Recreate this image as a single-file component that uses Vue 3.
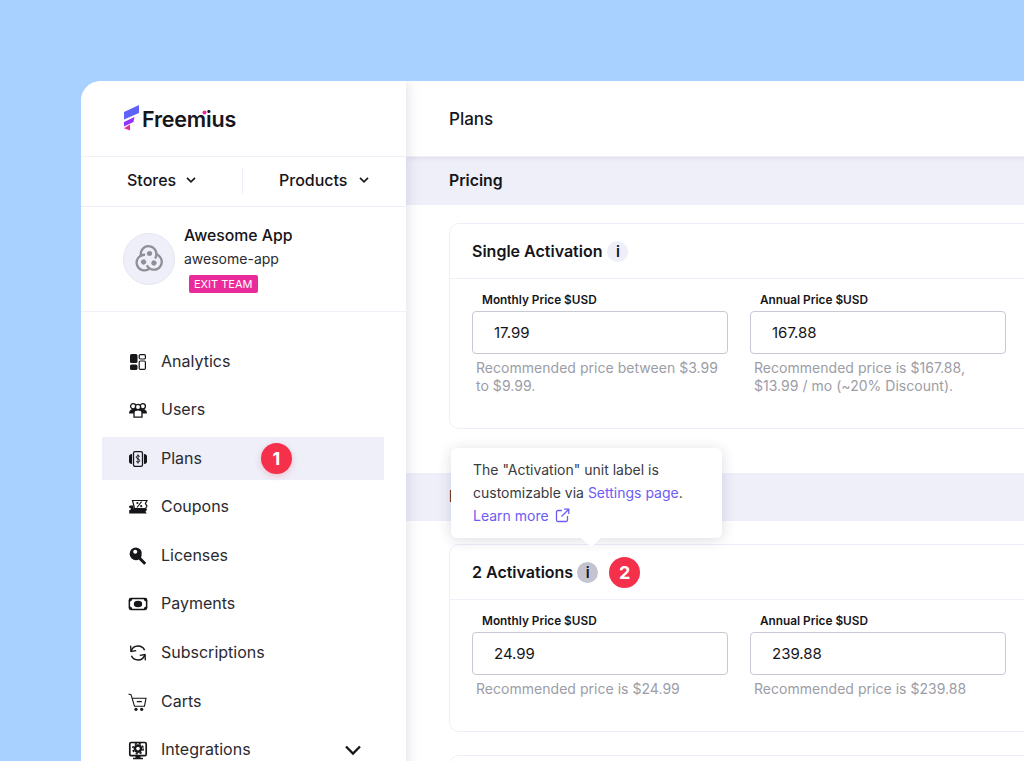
<script setup>
const nav = [
  { k: 'analytics', t: 'Analytics' },
  { k: 'users', t: 'Users' },
  { k: 'plans', t: 'Plans', active: true, badge: 1 },
  { k: 'coupons', t: 'Coupons' },
  { k: 'licenses', t: 'Licenses' },
  { k: 'payments', t: 'Payments' },
  { k: 'subs', t: 'Subscriptions' },
  { k: 'carts', t: 'Carts' },
  { k: 'integrations', t: 'Integrations', chevron: true }
]
const lobes = [0, 120, 240]
</script>

<template>
  <div class="page">
    <div class="window">
      <aside class="side">
        <div class="logo">
          <svg class="mark" width="16" height="26" viewBox="0 0 16 26">
            <path d="M0 7 15 0v8L0 14.500z" fill="#5f63f5" />
            <path d="M0 17 10.500 12 9.500 17 0 21.500z" fill="#9333ff" />
            <path d="M0 23.200 6 19.500V25.500z" fill="#ee2a9a" />
          </svg>
          <span class="brand">Freemius<i class="dot"></i></span>
        </div>
        <div class="switch">
          <div class="sw sw-l">Stores
            <svg width="12" height="8" viewBox="0 0 12 8"><path d="M2 1.800 6 5.800l4-4" fill="none" stroke="#1a1a1f" stroke-width="1.700" /></svg>
          </div>
          <div class="sw sw-r">Products
            <svg width="12" height="8" viewBox="0 0 12 8"><path d="M2 1.800 6 5.800l4-4" fill="none" stroke="#1a1a1f" stroke-width="1.700" /></svg>
          </div>
        </div>
        <div class="app">
          <div class="avatar">
            <svg width="32" height="32" viewBox="0 0 32 32" fill="none" stroke="#8f9097" stroke-width="2.300">
              <g v-for="r in lobes" :key="r" :transform="`rotate(${r} 16 16.500)`">
                <path d="M8.200 13.500A7.800 7.800 0 1 1 22 15.500" />
                <circle cx="16.500" cy="10.500" r="2.600" fill="#8f9097" stroke="none" />
              </g>
            </svg>
          </div>
          <div class="app-info">
            <div class="app-name">Awesome App</div>
            <div class="app-slug">awesome-app</div>
            <span class="exit">EXIT TEAM</span>
          </div>
        </div>
        <nav class="nav">
          <div v-for="n in nav" :key="n.k" class="item" :class="{ active: n.active }">
            <svg class="ico" width="20" height="20" viewBox="0 0 20 20">
              <g v-if="n.k === 'analytics'">
                <rect x="2" y="2" width="7.500" height="9" rx="1.600" fill="#15151a" />
                <rect x="2" y="12.500" width="7.500" height="5.500" rx="1.600" fill="#15151a" />
                <rect x="11.200" y="2.600" width="6.200" height="4.400" rx="1.200" fill="none" stroke="#15151a" stroke-width="1.200" />
                <rect x="11.200" y="9" width="6.200" height="8.400" rx="1.200" fill="none" stroke="#15151a" stroke-width="1.200" />
              </g>
              <g v-else-if="n.k === 'users'">
                <path d="M1 13.500c0-3 2-4.500 4-4.500h10c2 0 4 1.500 4 4.500H1z" fill="#15151a" />
                <circle cx="5.200" cy="6.300" r="2.600" fill="#fff" stroke="#15151a" stroke-width="1.300" />
                <circle cx="14.800" cy="6.300" r="2.600" fill="#fff" stroke="#15151a" stroke-width="1.300" />
                <circle cx="10" cy="7" r="2.600" fill="#fff" stroke="#15151a" stroke-width="1.300" />
                <path d="M6 17.200v-4.900c0-1.600 1.600-2.400 4-2.400s4 .8 4 2.400v4.900z" fill="#fff" stroke="#15151a" stroke-width="1.300" />
              </g>
              <g v-else-if="n.k === 'plans'">
                <rect x="5.500" y="2.600" width="9" height="14.800" rx="1.600" fill="none" stroke="#15151a" stroke-width="1.300" />
                <path d="M4 5v10c-2 0-3-1-3-2.400V7.400C1 6 2 5 4 5zM16 5v10c2 0 3-1 3-2.400V7.400C19 6 18 5 16 5z" fill="#15151a" />
                <path d="M11.800 7.600c-.4-.6-1-.9-1.800-.9-1 0-1.800.6-1.800 1.500 0 2 3.600 1.300 3.600 3.400 0 .9-.8 1.600-1.800 1.600-.8 0-1.500-.3-1.900-1M10 5.400v9.200" fill="none" stroke="#15151a" stroke-width="1" />
              </g>
              <g v-else-if="n.k === 'coupons'">
                <path d="M4.500 3.500h14.500l-1.600 3 1.600 2.600-1.600 2.400H6.500L4.500 3.500z" fill="none" stroke="#15151a" stroke-width="1.200" />
                <path d="M1 10c0-1 .7-1.600 1.500-1.600h3V11.500h13.300v1.500l-1.300 1.700 1.300 1.800H1.200v-3.400C2 13.400 2.800 12.800 2.800 12 2.800 11 2 10.600 1 10.500z" fill="#15151a" />
                <path d="M9 10.500 13.600 4.700" stroke="#15151a" stroke-width="1.100" />
                <circle cx="9.400" cy="6" r="1.100" fill="#15151a" />
                <circle cx="13.200" cy="9.200" r="1.100" fill="#15151a" />
              </g>
              <g v-else-if="n.k === 'licenses'">
                <path d="M8 1.400a6.400 6.400 0 1 0 0 12.800c1 0 2-.3 2.800-.7l5 5.100c.6.6 2.700-1.300 2.100-2l-4.900-5c.4-.8.6-1.600.6-2.600A6 6 0 0 0 8 1.400z" fill="#15151a" />
                <circle cx="7.200" cy="5.800" r="2" fill="#fff" />
              </g>
              <g v-else-if="n.k === 'payments'">
                <rect x=".6" y="3.800" width="18.800" height="12.400" rx="2.400" fill="#15151a" />
                <path d="M4.300 5.300H15.700Q16.200 7.200 17.900 7.600V12.400Q16.200 12.800 15.700 14.700H4.300Q3.800 12.800 2.100 12.400V7.600Q3.800 7.200 4.300 5.300z" fill="#fff" />
                <ellipse cx="10" cy="10" rx="4.200" ry="3.200" fill="#15151a" />
              </g>
              <g v-else-if="n.k === 'subs'" fill="none" stroke="#15151a" stroke-width="1.500">
                <path d="M3 8.500C4 5 6.600 3 10 3c3 0 5.400 1.600 6.600 4.200" />
                <path d="M17 11.500c-1 3.500-3.600 5.500-7 5.500-3 0-5.400-1.600-6.600-4.200" />
                <path d="M2.600 2.600 3 8.400l5.200-.8M17.400 17.400l-.4-5.800-5.200.8" stroke-width="1.300" />
              </g>
              <g v-else-if="n.k === 'carts'">
                <path d="M.5 2 3 2.600 6.500 14.200H16.500L18 6.200H4.400" fill="none" stroke="#15151a" stroke-width="1.100" />
                <path d="M8.800 9.600h5" stroke="#15151a" stroke-width="1.300" />
                <circle cx="8" cy="17.300" r="1.600" fill="#15151a" />
                <circle cx="13.700" cy="17.300" r="1.600" fill="#15151a" />
              </g>
              <g v-else>
                <path d="M3.200 2.500h13.600c.8 0 1.400.6 1.400 1.400v10.400c0 .8-.6 1.400-1.400 1.400H3.200c-.8 0-1.400-.6-1.400-1.400V3.900c0-.8.6-1.400 1.400-1.400z" fill="none" stroke="#15151a" stroke-width="1.700" />
                <circle cx="10" cy="8.600" r="4.300" fill="#15151a" />
                <circle cx="10" cy="8.600" r="5.200" fill="none" stroke="#15151a" stroke-width="1.600" stroke-dasharray="2.200 1.900" />
                <circle cx="10" cy="8.600" r="1.800" fill="#fff" />
                <path d="M7.500 15.500h5v2.300h2.500v1.500H5v-1.500h2.500z" fill="#15151a" />
              </g>
            </svg>
            <span class="label">{{ n.t }}</span>
            <span v-if="n.badge" class="num">{{ n.badge }}</span>
            <svg v-if="n.chevron" class="chev" width="18" height="12" viewBox="0 0 18 12"><path d="M2 2.500 9 9.500l7-7" fill="none" stroke="#15151a" stroke-width="2.300" /></svg>
          </div>
        </nav>
      </aside>
      <main class="main">
        <header class="top">Plans</header>
        <div class="band">Pricing</div>
        <section class="card first">
          <div class="card-head">Single Activation <span class="info">i</span></div>
          <div class="fields">
            <div class="field">
              <div class="flabel">Monthly Price $USD</div>
              <div class="input">17.99</div>
              <div class="hint">Recommended price between $3.99 to $9.99.</div>
            </div>
            <div class="field">
              <div class="flabel">Annual Price $USD</div>
              <div class="input">167.88</div>
              <div class="hint">Recommended price is $167.88, $13.99 / mo (~20% Discount).</div>
            </div>
          </div>
        </section>
        <div class="band second">Pricing</div>
        <section class="card second-card">
          <div class="card-head">2 Activations <span class="info on">i</span><span class="num two">2</span></div>
          <div class="fields">
            <div class="field">
              <div class="flabel">Monthly Price $USD</div>
              <div class="input">24.99</div>
              <div class="hint">Recommended price is $24.99</div>
            </div>
            <div class="field">
              <div class="flabel">Annual Price $USD</div>
              <div class="input">239.88</div>
              <div class="hint">Recommended price is $239.88</div>
            </div>
          </div>
        </section>
        <section class="card third"></section>
        <div class="tip">
          The "Activation" unit label is customizable via <span class="lnk">Settings page</span>.<br />
          <span class="lnk">Learn more</span>
          <svg class="ext" width="15" height="15" viewBox="0 0 15 15" fill="none" stroke="#6c5cf6" stroke-width="1.300"><path d="M7 2.500H3a1.500 1.500 0 0 0-1.500 1.500v8A1.500 1.500 0 0 0 3 13.500h8a1.500 1.500 0 0 0 1.500-1.500V8M9 1.200h4.800V6M13.800 1.200 6.500 8.500" /></svg>
          <i class="arrow"></i>
        </div>
      </main>
    </div>
  </div>
</template>

<style>
html, body { margin: 0; background: #a8d1ff; }
</style>

<style scoped>
.page {
  width: 1024px; height: 761px; overflow: hidden; box-sizing: border-box;
  padding: 81px 0 0 81px; background: #a8d1ff;
  font-family: Inter, "Noto Sans", sans-serif; color: #15151a;
}
.window {
  width: 1000px; height: 800px; display: flex; background: #fff;
  border-top-left-radius: 20px; overflow: hidden;
}
.side {
  width: 325px; flex: none; background: #fff; position: relative; z-index: 2;
  box-shadow: 2px 0 12px rgba(40, 40, 90, .13);
}
.logo { height: 76px; display: flex; align-items: center; padding-left: 43px; box-sizing: border-box; border-bottom: 1px solid #f0f0f8; gap: 2px; }
.mark { margin-top: -2px; }
.brand { position: relative; font-size: 21.500px; font-weight: 600; letter-spacing: -.2px; }
.dot { position: absolute; left: 61px; top: 5px; width: 3px; height: 3px; border-radius: 50%; background: #ee2a9a; box-shadow: 0 0 0 .5px #ee2a9a; }
.switch { height: 50px; display: flex; align-items: center; padding-bottom: 2px; border-bottom: 1px solid #eeeef8; box-sizing: border-box; font-size: 16px; font-weight: 500; }
.sw { display: flex; align-items: center; gap: 9px; padding-bottom: 2px; }
.sw-l { width: 162px; height: 27px; box-sizing: border-box; padding-left: 46px; border-right: 1px solid #eeeef8; }
.sw-r { padding-left: 36px; gap: 11px; }
.app { height: 105px; box-sizing: border-box; display: flex; padding: 18px 0 0 42px; border-bottom: 1px solid #f0f0f8; gap: 9px; }
.avatar { width: 52px; height: 52px; margin-top: 8px; border-radius: 50%; background: #eeeff8; border: 1px solid #e4e5f0; box-sizing: border-box; display: flex; align-items: center; justify-content: center; }
.app-name { font-size: 15.800px; font-weight: 500; line-height: 22px; }
.app-slug { font-size: 14px; line-height: 22px; margin-top: 1px; color: #2a2a30; }
.exit { display: block; width: fit-content; margin: 5px 0 0 5px; padding: 0 5px; height: 18px; line-height: 18px; border-radius: 2px; background: #ea2a9b; color: #fff; font-size: 11px; }
.nav { padding: 28px 22px 0 21px; display: flex; flex-direction: column; gap: 5.600px; }
.item { height: 43px; flex: none; display: flex; align-items: center; padding-left: 26px; font-size: 16px; color: #2a2a30; position: relative; }
.item.active { background: #eeeff9; }
.ico { flex: none; }
.label { margin-left: 13px; padding-bottom: 2px; }
.num { width: 31px; height: 31px; border-radius: 50%; background: #f4304a; color: #fff; font-weight: 700; font-size: 18px; display: flex; align-items: center; justify-content: center; flex: none; box-shadow: 0 2px 6px rgba(244, 48, 74, .25); }
.item .num { margin-left: 59px; }
.chev { position: absolute; right: 22px; top: 15px; }
.main { flex: 1; background: #fff; position: relative; min-width: 0; }
.top { height: 75px; box-sizing: border-box; padding-left: 43px; display: flex; align-items: center; font-size: 17px; font-weight: 500; box-shadow: 0 1px 6px rgba(40, 40, 90, .12); position: relative; }
.band { height: 48px; margin-top: 1px; background: #eeeff9; padding-left: 43px; padding-bottom: 1px; box-sizing: border-box; display: flex; align-items: center; font-size: 15.800px; font-weight: 600; }
.band.second { margin-top: 44px; }
.card { margin: 18px 0 0 43px; border: 1px solid #eeeef8; border-radius: 10px; width: 640px; box-sizing: border-box; }
.first { height: 206px; }
.second-card { margin-top: 23px; height: 188px; }
.third { margin-top: 23px; height: 60px; }
.card-head { height: 55px; border-bottom: 1px solid #f0f0f8; box-sizing: border-box; padding-left: 22px; display: flex; align-items: center; font-size: 16px; font-weight: 600; gap: 4px; }
.info { width: 21px; height: 21px; border-radius: 50%; background: #eeeff9; font-size: 15px; font-weight: 600; display: flex; align-items: center; justify-content: center; margin-left: 1px; }
.info.on { background: #c3c4d0; margin-left: 0; }
.num.two { margin-left: 7px; box-shadow: none; }
.fields { display: flex; gap: 22px; padding: 14px 0 0 22px; }
.field { width: 256px; flex: none; }
.flabel { font-size: 11.800px; font-weight: 600; line-height: 15px; padding-left: 10px; margin-bottom: 3px; }
.input { height: 43px; box-sizing: border-box; border: 1px solid #c8c9d4; border-radius: 4px; padding-left: 21px; display: flex; align-items: center; font-size: 15px; color: #15151a; }
.hint { margin: 5px 0 0 4px; font-size: 14px; line-height: 18px; letter-spacing: .03px; color: #9c9da6; width: 246px; }
.tip { position: absolute; left: 45px; top: 367px; width: 271px; height: 90px; box-sizing: border-box; padding: 10px 20px 0 22px; background: #fff; border-radius: 6px; box-shadow: 0 2px 14px rgba(40, 40, 90, .16); font-size: 14px; line-height: 23px; color: #3a3a42; z-index: 3; }
.lnk { color: #6c5cf6; }
.ext { vertical-align: -2px; margin-left: 6px; }
.arrow { position: absolute; left: 130px; bottom: -9px; width: 0; height: 0; border-left: 10px solid transparent; border-right: 10px solid transparent; border-top: 9px solid #fff; }
</style>
